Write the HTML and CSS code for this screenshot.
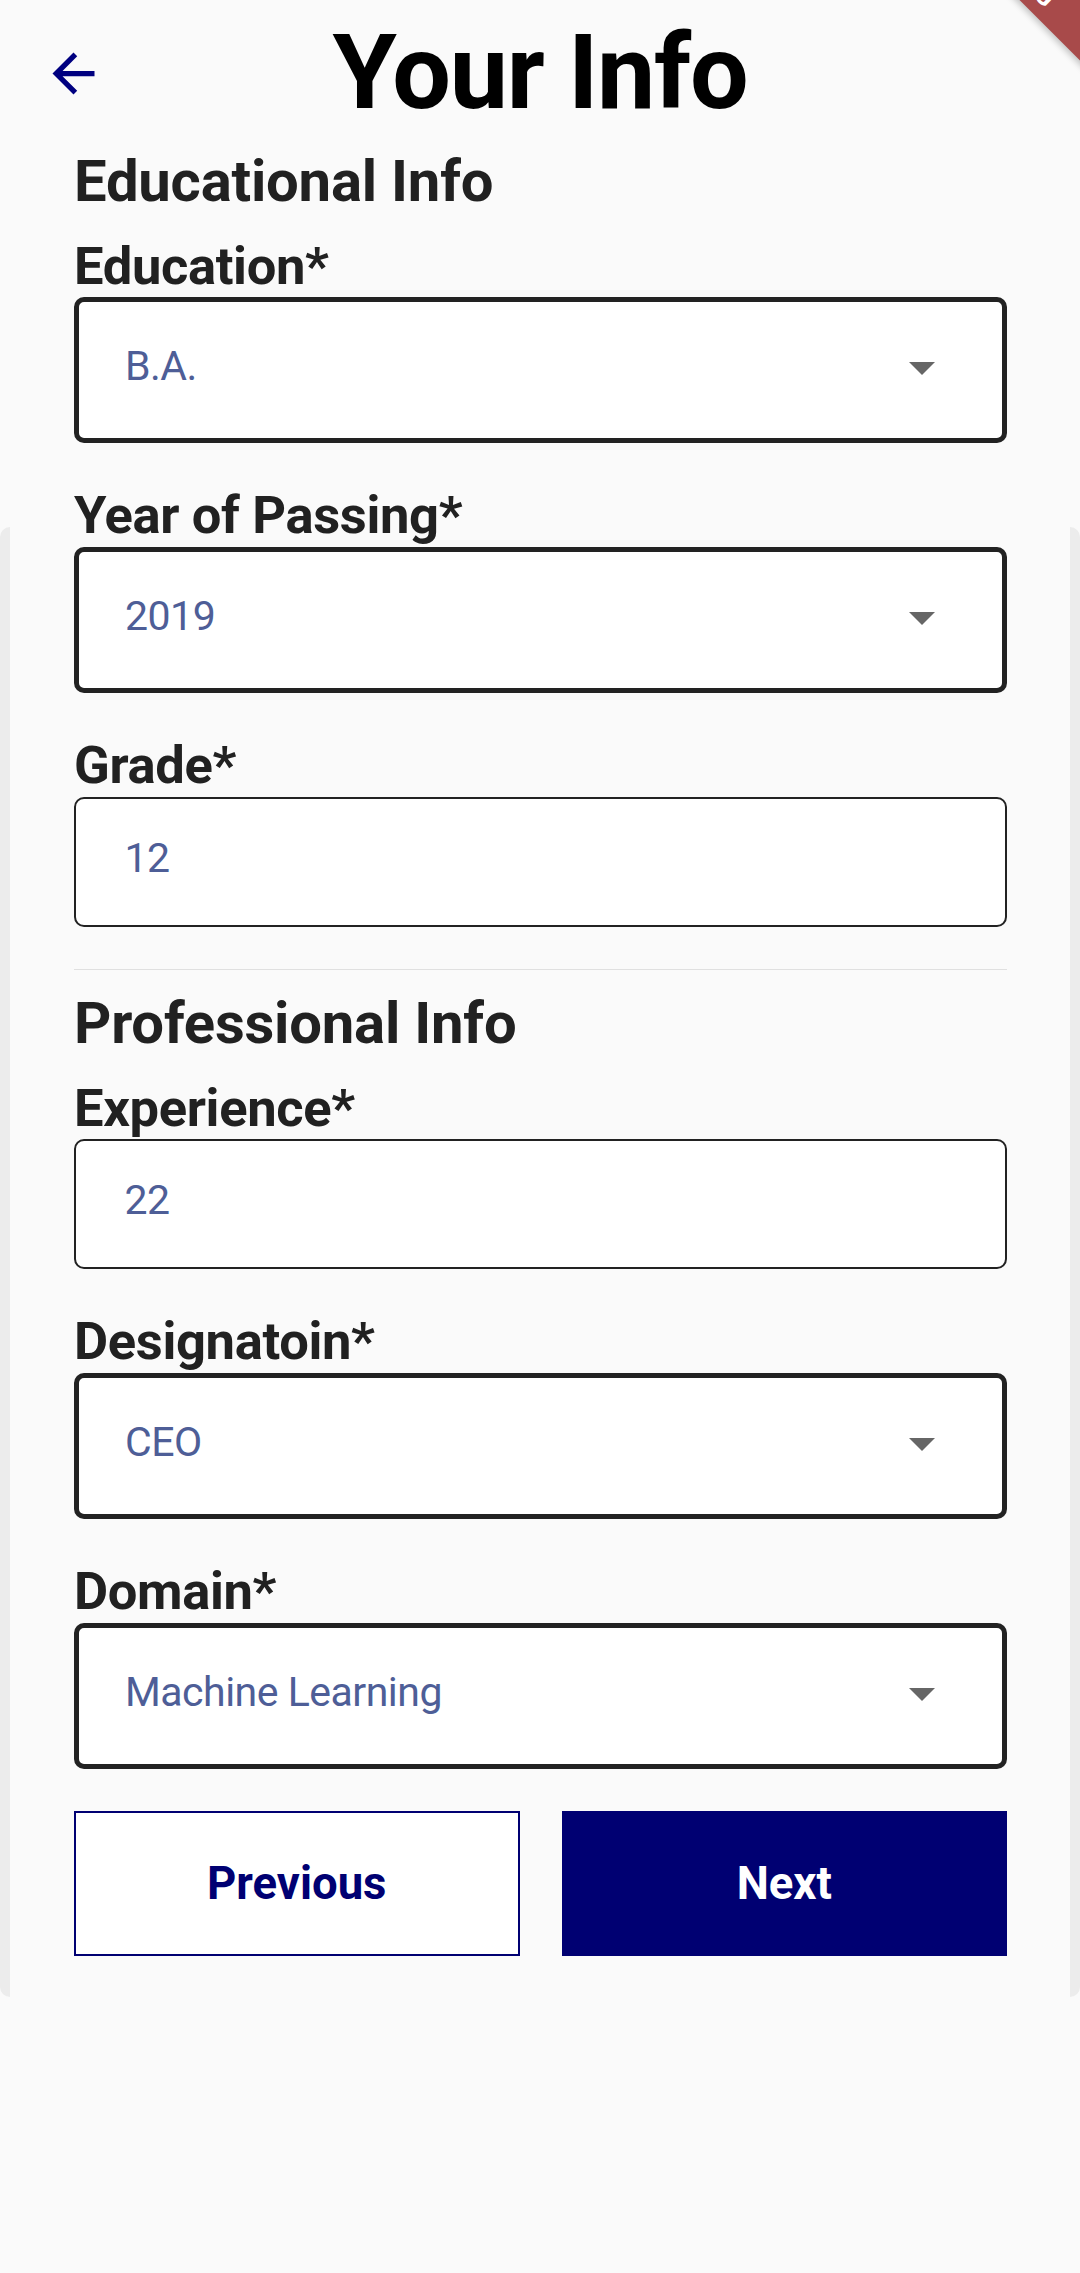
FILE: index.html
```html
<!DOCTYPE html>
<html lang="en">
<head>
<meta charset="utf-8">
<title>Your Info</title>
<link rel="stylesheet" href="styles.css">
</head>
<body>
<div class="card-deco"></div>
<div class="banner"><span>DEBUG</span></div>

<header class="topbar">
  <button class="back" aria-label="Back">
    <svg viewBox="0 0 24 24" width="63" height="63"><path d="M20 11H7.83l5.59-5.59L12 4l-8 8 8 8 1.41-1.41L7.83 13H20v-2z"/></svg>
  </button>
  <h1 class="title">Your Info</h1>
  <span class="spacer"></span>
</header>

<main class="form">
  <h2 class="section">Educational Info</h2>

  <div class="field">
    <label class="label">Education*</label>
    <div class="box select"><span class="value">B.A.</span><svg class="caret" viewBox="0 0 26 13" width="26" height="13"><polygon points="0,0 26,0 13,13"/></svg></div>
  </div>

  <div class="field">
    <label class="label">Year of Passing*</label>
    <div class="box select"><span class="value">2019</span><svg class="caret" viewBox="0 0 26 13" width="26" height="13"><polygon points="0,0 26,0 13,13"/></svg></div>
  </div>

  <div class="field">
    <label class="label">Grade*</label>
    <div class="box text"><span class="value">12</span></div>
  </div>

  <hr class="divider">

  <h2 class="section">Professional Info</h2>

  <div class="field">
    <label class="label">Experience*</label>
    <div class="box text"><span class="value">22</span></div>
  </div>

  <div class="field">
    <label class="label">Designatoin*</label>
    <div class="box select"><span class="value">CEO</span><svg class="caret" viewBox="0 0 26 13" width="26" height="13"><polygon points="0,0 26,0 13,13"/></svg></div>
  </div>

  <div class="field">
    <label class="label">Domain*</label>
    <div class="box select"><span class="value">Machine Learning</span><svg class="caret" viewBox="0 0 26 13" width="26" height="13"><polygon points="0,0 26,0 13,13"/></svg></div>
  </div>

  <div class="actions">
    <button class="btn outline">Previous</button>
    <button class="btn solid">Next</button>
  </div>
</main>
</body>
</html>
```

FILE: styles.css
```css
html, body {
  margin: 0;
  padding: 0;
  overflow: hidden;
}
body {
  position: relative;
  width: 1080px;
  height: 2273px;
  background: #fafafa;
  font-family: Roboto, "Noto Sans", "Liberation Sans", sans-serif;
  color: #212121;
}

/* decorative card edge behind the form */
.card-deco {
  position: absolute;
  top: 527px;
  left: 0;
  width: 1080px;
  height: 1470px;
  box-sizing: border-box;
  border-left: 10px solid #ececec;
  border-right: 10px solid #ececec;
  border-radius: 10px;
  background: #fafafa;
  z-index: 0;
}

/* debug ribbon in the corner */
.banner {
  position: absolute;
  left: 866px;
  top: -59px;
  width: 300px;
  height: 46px;
  background: #a84a4a;
  transform: rotate(45deg);
  box-shadow: 0 3px 6px rgba(0, 0, 0, 0.22);
  display: flex;
  align-items: center;
  justify-content: center;
  z-index: 5;
}
.banner span {
  color: #fff;
  font-weight: 700;
  font-size: 27px;
  line-height: 27px;
  letter-spacing: 2px;
  transform: translate(6px, 2px);
}

.topbar {
  position: relative;
  z-index: 1;
  display: grid;
  grid-template-columns: 1fr auto 1fr;
  align-items: center;
  padding-top: 21px;
  height: 104px;
}
.back {
  justify-self: start;
  margin-left: 42px;
  width: 63px;
  height: 63px;
  padding: 0;
  border: 0;
  background: none;
  display: flex;
}
.back svg {
  fill: #000080;
}
.title {
  margin: 0;
  font-size: 104px;
  line-height: 104px;
  font-weight: 700;
  color: #000;
  letter-spacing: -1.3px;
}

.form {
  position: relative;
  z-index: 1;
  display: flex;
  flex-direction: column;
  padding: 27px 73px 0 74px;
}

.section {
  margin: 0;
  font-size: 58px;
  line-height: 58px;
  font-weight: 700;
  color: #212121;
  letter-spacing: -0.2px;
}

.field {
  display: flex;
  flex-direction: column;
  margin-top: 46px;
}
.section + .field {
  margin-top: 29.6px;
}
.label {
  font-size: 52.5px;
  line-height: 52.5px;
  font-weight: 700;
  color: #212121;
  letter-spacing: -0.35px;
  margin-bottom: 5.3px;
}

.box {
  box-sizing: border-box;
  display: flex;
  align-items: center;
  background: #fff;
  border-style: solid;
  border-color: #222;
  border-radius: 10px;
  padding-bottom: 7px;
}
.box.select {
  height: 146px;
  border-width: 5px;
  padding-left: 46px;
  padding-right: 67px;
}
.box.text {
  height: 130px;
  border-width: 2.6px;
  padding-left: 48.4px;
}
.value {
  flex: 1;
  font-size: 41px;
  line-height: 41px;
  letter-spacing: -0.5px;
  color: #4e5e97;
}
.caret {
  fill: #666;
  margin-top: 4px;
}

.divider {
  margin: 42px 0 0;
  border: 0;
  height: 1px;
  background: #e0e0e0;
}
.divider + .section {
  margin-top: 24px;
}

.actions {
  display: grid;
  grid-template-columns: 1fr 1fr;
  gap: 42px;
  margin-top: 42px;
}
.btn {
  height: 145px;
  box-sizing: border-box;
  font-family: Roboto, "Noto Sans", "Liberation Sans", sans-serif;
  font-size: 45.5px;
  font-weight: 700;
  border-radius: 0;
  padding: 0;
}
.btn.outline {
  background: #fff;
  color: #000072;
  border: 2.6px solid #000072;
}
.btn.solid {
  background: #000072;
  color: #fff;
  border: 0;
}
```
